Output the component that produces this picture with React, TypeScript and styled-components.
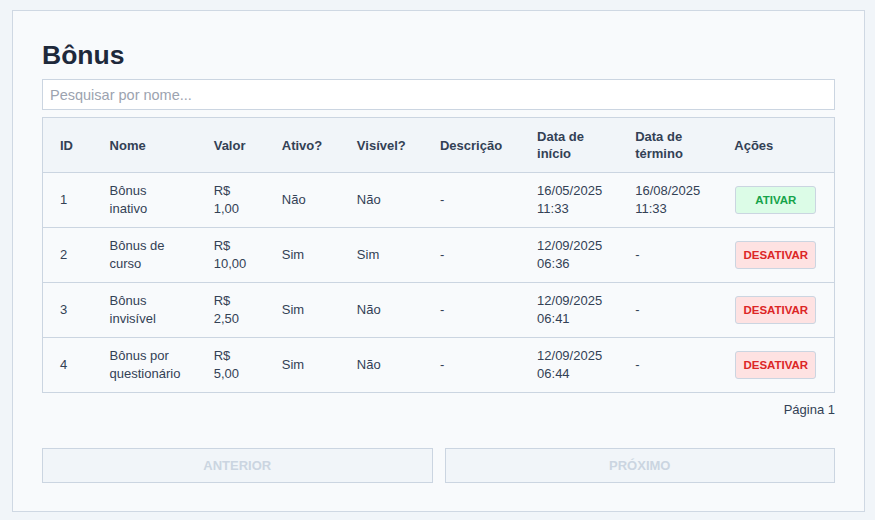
import React from "react";
import styled, { createGlobalStyle } from "styled-components";

const Global = createGlobalStyle`
  html, body { margin: 0; padding: 0; background: #f1f5f9; }
  body { font-family: "Liberation Sans", Arial, sans-serif; }
  * { box-sizing: border-box; }
`;

const Page = styled.div`
  padding: 10px 10px 9px 12px;
`;

const Card = styled.section`
  background: #f8fafc;
  border: 1px solid #cfd8e3;
  padding: 29px 29px 28px 29px;
  display: flex;
  flex-direction: column;
`;

const Title = styled.h1`
  margin: 0 0 9px 0;
  font-size: 26.5px;
  line-height: 30px;
  font-weight: 700;
  color: #1e293b;
`;

const Search = styled.input`
  height: 31px;
  border: 1px solid #cbd5e1;
  background: #ffffff;
  padding: 0 7px;
  font-family: "Liberation Sans", Arial, sans-serif;
  font-size: 14.5px;
  color: #1e293b;
  outline: none;
  margin-bottom: 7px;
  &::placeholder { color: #9ca3af; }
`;

const Table = styled.table`
  width: 100%;
  border-collapse: collapse;
  table-layout: fixed;
  border: 1px solid #cbd5e1;
  font-size: 13px;
  color: #334155;
`;

const HeadCell = styled.th`
  background: #f1f5f9;
  text-align: left;
  font-weight: 700;
  color: #334155;
  line-height: 17px;
  padding: 10px 15px 10px 17px;
  height: 55px;
  vertical-align: middle;
  border-bottom: 1px solid #cbd5e1;
`;

const Row = styled.tr`
  border-bottom: 1px solid #cbd5e1;
`;

const Cell = styled.td`
  line-height: 18px;
  padding: 9px 15px 9px 17px;
  height: 55px;
  vertical-align: middle;
  color: #334155;
`;

const ActionButton = styled.button<{ $variant: "on" | "off" }>`
  display: block;
  margin-left: 1px;
  width: 81px;
  height: 28px;
  border-radius: 3px;
  border: 1px solid #cbd5e1;
  font-family: "Liberation Sans", Arial, sans-serif;
  font-size: 11.5px;
  font-weight: 700;
  padding: 0;
  cursor: pointer;
  background: ${(p) => (p.$variant === "on" ? "#dcfce7" : "#fee2e2")};
  color: ${(p) => (p.$variant === "on" ? "#16a34a" : "#dc2626")};
`;

const PageLabel = styled.div`
  margin-top: 8px;
  text-align: right;
  font-size: 13px;
  line-height: 18px;
  color: #334155;
`;

const Pager = styled.div`
  margin-top: 29px;
  display: grid;
  grid-template-columns: 1fr 1fr;
  gap: 12px;
`;

const PagerButton = styled.button`
  height: 35px;
  border: 1px solid #cbd5e1;
  background: #f1f5f9;
  color: #cbd5e1;
  font-family: "Liberation Sans", Arial, sans-serif;
  font-size: 13px;
  font-weight: 700;
  cursor: default;
`;

const widths = [50, 104, 68, 75, 83, 97, 98, 99, 117];
const headers = ["ID", "Nome", "Valor", "Ativo?", "Visível?", "Descrição", "Data de início", "Data de término", "Ações"];

type Bonus = {
  id: number;
  nome: string;
  valor: string;
  ativo: boolean;
  visivel: boolean;
  descricao: string;
  inicio: string;
  fim: string;
};

const rows: Bonus[] = [
  { id: 1, nome: "Bônus inativo", valor: "R$ 1,00", ativo: false, visivel: false, descricao: "-", inicio: "16/05/2025 11:33", fim: "16/08/2025 11:33" },
  { id: 2, nome: "Bônus de curso", valor: "R$ 10,00", ativo: true, visivel: true, descricao: "-", inicio: "12/09/2025 06:36", fim: "-" },
  { id: 3, nome: "Bônus invisível", valor: "R$ 2,50", ativo: true, visivel: false, descricao: "-", inicio: "12/09/2025 06:41", fim: "-" },
  { id: 4, nome: "Bônus por questionário", valor: "R$ 5,00", ativo: true, visivel: false, descricao: "-", inicio: "12/09/2025 06:44", fim: "-" },
];

export default function App() {
  return (
    <>
      <Global />
      <Page>
        <Card>
          <Title>Bônus</Title>
          <Search placeholder="Pesquisar por nome..." />
          <Table>
            <colgroup>
              {widths.map((w, i) => (
                <col key={i} style={{ width: w }} />
              ))}
            </colgroup>
            <thead>
              <tr>
                {headers.map((h) => (
                  <HeadCell key={h}>{h}</HeadCell>
                ))}
              </tr>
            </thead>
            <tbody>
              {rows.map((r) => (
                <Row key={r.id}>
                  <Cell>{r.id}</Cell>
                  <Cell>{r.nome}</Cell>
                  <Cell>{r.valor}</Cell>
                  <Cell>{r.ativo ? "Sim" : "Não"}</Cell>
                  <Cell>{r.visivel ? "Sim" : "Não"}</Cell>
                  <Cell>{r.descricao}</Cell>
                  <Cell>{r.inicio}</Cell>
                  <Cell>{r.fim}</Cell>
                  <Cell>
                    <ActionButton $variant={r.ativo ? "off" : "on"}>
                      {r.ativo ? "DESATIVAR" : "ATIVAR"}
                    </ActionButton>
                  </Cell>
                </Row>
              ))}
            </tbody>
          </Table>
          <PageLabel>Página 1</PageLabel>
          <Pager>
            <PagerButton disabled>ANTERIOR</PagerButton>
            <PagerButton disabled>PRÓXIMO</PagerButton>
          </Pager>
        </Card>
      </Page>
    </>
  );
}
